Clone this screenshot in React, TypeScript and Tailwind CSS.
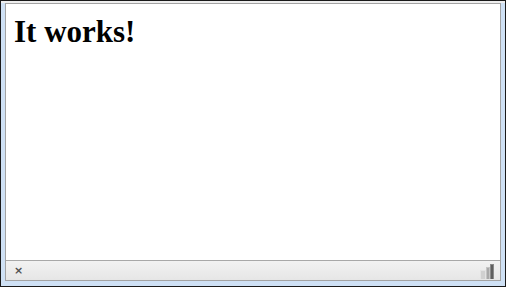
import React from 'react';

const ResizeGrip = () => (
  <svg width="15" height="15" viewBox="0 0 15 15" className="block">
    <rect x="0" y="6" width="6" height="9" fill="#e2e2e2" />
    <rect x="1" y="7" width="4" height="8" fill="#d0d0d0" />
    <rect x="6" y="3" width="4" height="12" fill="#c4c4c4" />
    <rect x="7" y="4" width="2" height="11" fill="#a8a8a8" />
    <rect x="10" y="0" width="4" height="15" fill="#8a8a8a" />
    <rect x="11" y="1" width="2" height="14" fill="#5e5e5e" />
  </svg>
);

export default function App() {
  return (
    <div className="w-[506px] h-[287px] border border-[#1a1a1a] bg-[#cfe1f5] flex flex-col">
      <div className="h-[2px] bg-[#eeeeee]" />
      <div className="flex-1 flex flex-col mx-[4px] mb-[5px] border border-[#a3a3a3] bg-white">
        <div className="flex-1 pl-[8px] pt-[11px]">
          <h1
            className="text-[31px] font-bold leading-[34px] text-black"
            style={{ fontFamily: '"Liberation Serif", "Times New Roman", serif' }}
          >
            It works!
          </h1>
        </div>
        <div className="h-[20px] border-t border-[#a8a8a8] bg-gradient-to-b from-[#f2f2f2] to-[#e6e6e6] flex items-center justify-between pl-[8px] pr-[5px]">
          <span
            className="text-[11px] leading-none text-[#505050] font-bold"
            style={{ fontFamily: '"DejaVu Sans", sans-serif' }}
          >
            ×
          </span>
          <div className="self-end mb-[1px]">
            <ResizeGrip />
          </div>
        </div>
      </div>
    </div>
  );
}
